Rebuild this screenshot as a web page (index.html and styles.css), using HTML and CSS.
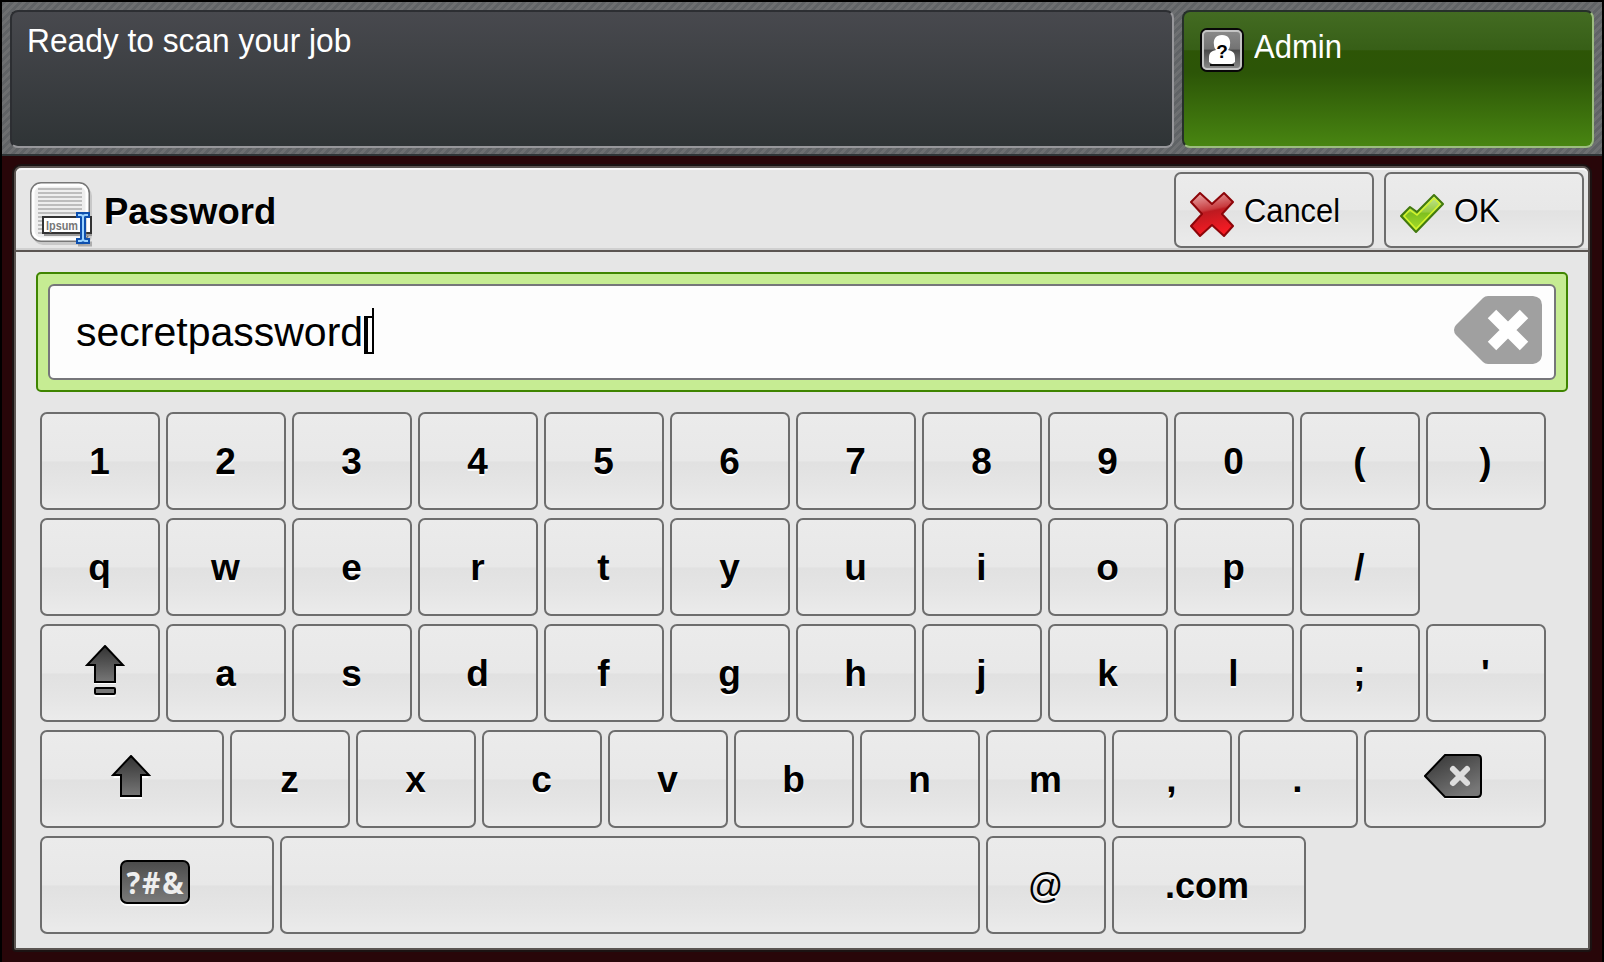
FILE: index.html
```
<!DOCTYPE html>
<html lang="en"><head><meta charset="utf-8"><title>Password</title><link rel="stylesheet" href="styles.css"></head>
<body>
<header class="status">
<div class="message"><span class="t-msg">Ready to scan your job</span></div>
<div class="user">
<svg class="user-icon" width="44" height="44" viewBox="0 0 44 44"><defs><linearGradient id="ug" x1="0" y1="0" x2="0" y2="1"><stop offset="0" stop-color="#8c8c8c"/><stop offset=".48" stop-color="#737373"/><stop offset=".5" stop-color="#484848"/><stop offset="1" stop-color="#929292"/></linearGradient></defs><rect x="1" y="1" width="42" height="42" rx="6" fill="url(#ug)" stroke="#080808" stroke-width="2"/><rect x="3" y="3" width="38" height="38" rx="4" fill="none" stroke="#c4c4c4" stroke-width="2"/><path d="M10 37h24" stroke="#111" stroke-width="2"/><path d="M22 7c-6 0-9 4-8 10 0 2 1 4 2 5-5 1-7 3-7 8v4l3 2h20l3-2v-4c0-5-2-7-7-8 1-1 2-3 2-5 1-6-2-10-8-10z" fill="#fff"/><text class="q" x="22" y="30" text-anchor="middle">?</text></svg>
<span class="t-admin">Admin</span></div>
</header>
<main class="panel">
<div class="titlebar">
<svg class="form-icon" width="66" height="68" viewBox="0 0 66 68"><rect x="3" y="4" width="59" height="59" rx="10" fill="#aaa" opacity=".5"/><rect x="1" y="1" width="58" height="58" rx="10" fill="#eee" stroke="#777" stroke-width="2"/><rect x="3" y="3" width="54" height="54" rx="8" fill="none" stroke="#fff" stroke-width="3"/><path d="M8 7h44M8 11h44M8 15h44M8 19h44M8 23h44M8 27h44M8 31h44M8 35h5M8 39h5M8 43h5M8 47h5M8 51h5" stroke="#bdbdbd" stroke-width="2"/><rect x="14" y="37" width="48" height="17" fill="#999"/><rect x="13" y="35" width="48" height="16" fill="#fff" stroke="#333" stroke-width="2"/><text class="lorem" x="16" y="48" textLength="32" lengthAdjust="spacingAndGlyphs">lpsum</text><path d="M48 33h12M54 33v28M48 62h14" stroke="#888" stroke-width="5" opacity=".6"/><path d="M46 30h14v6h-4v20h4v6H46v-6h4V36h-4z" fill="#0d4fae"/><path d="M48 33h3l2 1 2-1h3M53 34v24M48 59h3l2-1 2 1h3" fill="none" stroke="#9bd3ff" stroke-width="2"/></svg>
<h1><span class="t-title">Password</span></h1>
<button class="action"><svg class="x-icon" width="44" height="46" viewBox="0 0 44 46"><defs><linearGradient id="rg" x1="0" y1="0" x2=".2" y2="1"><stop offset="0" stop-color="#edb1b2"/><stop offset=".45" stop-color="#c83b3e"/><stop offset=".5" stop-color="#bd1a20"/><stop offset="1" stop-color="#f51b23"/></linearGradient></defs><path d="M10 1 L22 12 L34 1 L43 10 L32 22 L43 34 L34 44 L22 33 L10 44 L1 34 L12 22 L1 10Z" fill="url(#rg)" stroke="#8d0509" stroke-width="2" stroke-linejoin="round"/></svg><span class="t-cancel">Cancel</span></button>
<button class="action ok"><svg class="ok-icon" width="44" height="40" viewBox="0 0 44 40"><defs><linearGradient id="gg" x1="0" y1="0" x2="0" y2="1"><stop offset="0" stop-color="#c9e89a"/><stop offset=".45" stop-color="#96cb40"/><stop offset=".5" stop-color="#7fc01f"/><stop offset="1" stop-color="#abdf2b"/></linearGradient></defs><path d="M1 22 L10 13 L17 18 L34 1 L43 10 L16 38Z" fill="url(#gg)" stroke="#42790e" stroke-width="2" stroke-linejoin="round"/><path d="M4 22 L10 16 L17 21 L34 4 L40 10 L16 35Z" fill="none" stroke="#d6f52c" stroke-width="1.4"/></svg><span class="t-ok">OK</span></button>
</div>
<div class="focus"><div class="field"><span class="t-pass">secretpassword</span><i class="box"></i><svg class="clear" width="90" height="70" viewBox="0 0 90 70"><path d="M1 35 Q1 32 3 30 L30 3 Q32 1 35 1 H80 Q89 2 89 10 V60 Q88 68 80 69 H35 Q32 69 30 67 L3 40 Q1 38 1 35Z" fill="#a0a0a0"/><path d="M39 19L71 51M71 19L39 51" stroke="#fff" stroke-width="12"/></svg></div></div>
<div class="keys" id="keys">
<div class="row"><b>1</b><b>2</b><b>3</b><b>4</b><b>5</b><b>6</b><b>7</b><b>8</b><b>9</b><b>0</b><b>(</b><b>)</b></div>
<div class="row"><b>q</b><b>w</b><b>e</b><b>r</b><b>t</b><b>y</b><b>u</b><b>i</b><b>o</b><b>p</b><b>/</b></div>
<div class="row"><b><svg class="caps" width="40" height="52" viewBox="0 0 40 52"><defs><linearGradient id="kg" x1="0" y1="0" x2="0" y2="1"><stop offset="0" stop-color="#333"/><stop offset="1" stop-color="#777"/></linearGradient></defs><path d="M20 3L38 21H31V39H9V21H2Z" fill="#fff"/><path d="M20 1L38 20H30V37H10V20H2Z" fill="url(#kg)" stroke="#000" stroke-width="2"/><rect x="9" y="44" width="22" height="8" rx="2" fill="#fff"/><rect x="10" y="43" width="20" height="6" rx="1" fill="#777" stroke="#000" stroke-width="2"/></svg></b><b>a</b><b>s</b><b>d</b><b>f</b><b>g</b><b>h</b><b>j</b><b>k</b><b>l</b><b>;</b><b>'</b></div>
<div class="row"><b class="shift"><svg class="up" width="40" height="46" viewBox="0 0 40 46"><path d="M20 3L38 23H31V44H9V23H2Z" fill="#fff"/><path d="M20 1L38 20H30V41H10V20H2Z" fill="url(#kg)" stroke="#000" stroke-width="2"/></svg></b><b>z</b><b>x</b><b>c</b><b>v</b><b>b</b><b>n</b><b>m</b><b>,</b><b>.</b><b class="back"><svg class="del" width="58" height="46" viewBox="0 0 58 46"><defs><linearGradient id="dg" x1="0" y1="0" x2=".6" y2="1"><stop offset="0" stop-color="#333"/><stop offset="1" stop-color="#777"/></linearGradient></defs><path d="M2 24L21 45H53L57 41V8Z" fill="#fff"/><path d="M1 22L21 1H53Q57 1 57 5V39Q57 43 53 43H21Z" fill="url(#dg)" stroke="#000" stroke-width="2"/><path d="M29 15L43 29M43 15L29 29" stroke="#ddd" stroke-width="6" stroke-linecap="round"/></svg></b></div>
<div class="row"><b class="sym"><i class="chip"><span>?#&amp;</span></i></b><b class="space"></b><b class="at">@</b><b class="com">.com</b></div>
</div>
</main>
</body></html>
```
FILE: styles.css
```
*{box-sizing:border-box}
html{height:962px;overflow:hidden}
body{margin:0;width:1604px;height:962px;overflow:hidden;background:#280609;border:solid #000;border-width:2px 2px 0 2px;font-family:"Liberation Sans",Arial,sans-serif;color:#000}
span{white-space:nowrap;display:inline-block;transform-origin:0 0}
.status{height:154px;padding:8px;display:flex;gap:8px;border-bottom:2px solid #2e3436;background:repeating-linear-gradient(135deg,#606366 0 2.83px,#6d6f71 2.83px 5.66px)}
.message,.user{height:138px;border-radius:8px;border:2px solid;color:#fff;font-size:33px;line-height:38px}
.message{width:1164px;border-color:#2c2e32 #97979b #97979b #2c2e32;background:linear-gradient(#48494e,#2f3436);padding:10px 15px}
.user{width:412px;border-color:#26302a #9dbd80 #9dbd80 #26302a;background:linear-gradient(#436b22,#375f17 28%,#2d5506 29%,#2c5507 45%,#488511);padding:16px;display:flex;gap:10px}
.t-msg{transform:scaleX(.961)}
.t-admin{transform:scaleX(.94)}
.t-cancel{transform:scaleX(.935)}
.t-ok{transform:scaleX(.96)}
.t-title{transform:scaleX(.985)}
.q{font:bold 19px "Liberation Sans",sans-serif}
.lorem{font:bold 12px "Liberation Sans",sans-serif;fill:#777}
.panel{margin:10px 0 0 12px;width:1576px;height:784px;border:2px solid #5b5552;border-radius:7px 7px 2px 2px;background:#e6e6e6;box-shadow:0 0 0 2px #1b1212}
.titlebar{height:84px;border-bottom:2px solid #5b5552;border-top:2px solid #f8f8f8;box-shadow:inset 0 -2px #d0d0d0;display:flex;padding:2px 4px 0 14px;border-radius:6px 6px 0 0}
.form-icon{margin-top:10px}
h1{margin:18px 0 0 8px;font-size:37px;line-height:44px;width:1070px;text-shadow:0 2px #fff}
.action{width:200px;height:76px;border:2px solid #6d6d6d;border-radius:7px;background:linear-gradient(#ebebeb,#e8e8e8 50%,#e2e2e2 51%,#ebebeb);padding:0 0 0 14px;display:flex;align-items:flex-start;gap:10px;font:33px/38px "Liberation Sans",sans-serif;color:#000;flex:none;text-shadow:0 2px #fff}
.action span{margin-top:18px}
.ok{margin-left:10px}
.x-icon{margin-top:18px}
.ok-icon{margin-top:20px}
.focus{margin:20px 0 0 20px;width:1532px;height:120px;border:2px solid #3f8500;border-radius:5px;background:#c6ec93;padding:10px}
.field{height:96px;border:2px solid #76767a;border-radius:6px;background:#fdfdfd;display:flex;padding:0 11px 0 26px;align-items:flex-start;font-size:41px;line-height:46px}
.field span{margin-top:23px}
.box{width:10px;height:38px;margin:30px 0 0 1px;border:solid #000;border-width:2px 2px 2px 4px;position:relative}
.box::after{content:"";position:absolute;right:-2px;top:-10px;width:2px;height:10px;background:#000}
.clear{margin:9px 0 0 auto}
.keys{margin:20px 0 0 24px;display:flex;flex-direction:column;gap:8px}
.row{display:flex;gap:6px}
.row b{width:120px;height:98px;border:2px solid #6d6d6d;border-radius:7px;background:linear-gradient(#ebebeb,#e8e8e8 50%,#e1e1e1 51%,#e5e5e5 76%,#ebebeb);font-size:37px;line-height:95px;text-align:center;text-shadow:0 2px #fff;padding-right:1px}
.row .shift{width:184px}.row .back{width:182px}.row .sym{width:234px}.row .space{width:700px}.row .com{width:194px;padding-right:4px;font-size:36px}
.row .at{font-weight:400;font-size:35px}
.row svg{display:block}
.caps{margin:19px 0 0 43px}
.up{margin:23px 0 0 69px}
.del{margin:22px 0 0 58px}
.chip{display:block;width:70px;height:44px;margin:22px 0 0 78px;border:2px solid #000;border-radius:7px;background:linear-gradient(#4c4c4c,#7a7a7a);box-shadow:0 2px #fff;color:#eee;text-shadow:none;font:bold 31px/40px "Noto Sans",sans-serif;display:flex;justify-content:center}
.chip span{flex:none;transform-origin:50% 0;letter-spacing:2px;margin-right:-2px;transform:scaleX(.92)}
```
